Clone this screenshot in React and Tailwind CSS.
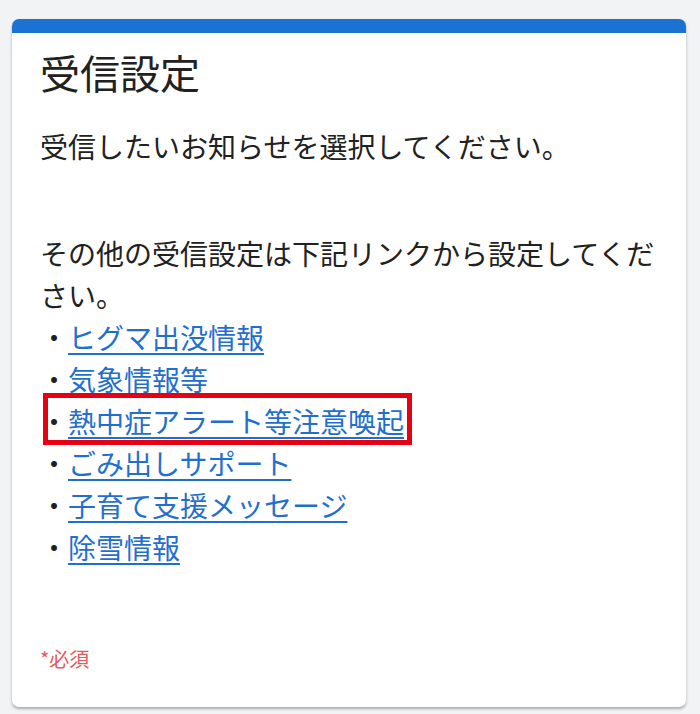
export default function App() {
  const links = [
    "ヒグマ出没情報",
    "気象情報等",
    "熱中症アラート等注意喚起",
    "ごみ出しサポート",
    "子育て支援メッセージ",
    "除雪情報",
  ];
  return (
    <div
      className="w-[700px] h-[714px] bg-[#f1f3f4] pt-[19px] pl-[12px] pr-[14px] overflow-hidden"
      style={{ fontFamily: '"Noto Sans CJK JP", "Noto Sans", sans-serif' }}
    >
      <div className="bg-white rounded-[7px] h-[688px] shadow-[0_2px_3px_rgba(0,0,0,0.3)] overflow-hidden flex flex-col">
        <div className="h-[14px] bg-[#1a73d2]" />
        <div className="px-[28px] pt-[9px] text-[#212121] flex-1 flex flex-col">
          <h1 className="text-[40px] leading-[60px] font-normal">受信設定</h1>
          <p className="mt-[23px] text-[28px] leading-[42px]">受信したいお知らせを選択してください。</p>
          <p className="mt-[65px] text-[28px] leading-[42px]">
            その他の受信設定は下記リンクから設定してください。
          </p>
          <ul className="text-[28px] leading-[42px]">
            {links.map((l, i) => (
              <li key={l} className="relative flex">
                <span>・</span>
                <a className="text-[#1f6fcf] underline decoration-[2px] underline-offset-[4px]" href="#">
                  {l}
                </a>
                {i === 2 && (
                  <span className="absolute left-[3px] top-[-7px] w-[369px] h-[52px] border-[5px] border-[#e60012]" />
                )}
              </li>
            ))}
          </ul>
          <div className="mt-[76px] text-[20px] leading-[30px] text-[#e85a5e]">*必須</div>
        </div>
      </div>
    </div>
  );
}
